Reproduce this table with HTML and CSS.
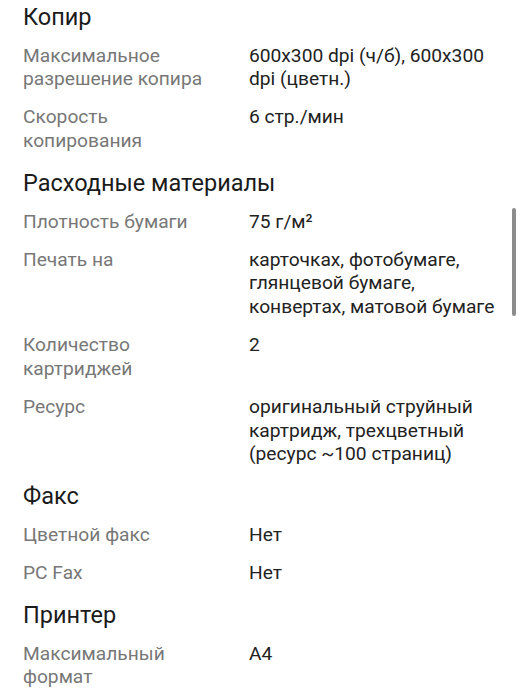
FILE: index.html
```html
<!DOCTYPE html>
<html lang="ru">
<head>
<meta charset="utf-8">
<link rel="stylesheet" href="styles.css">
</head>
<body>
<div class="page">
  <section class="group">
    <h2 class="group-title">Копир</h2>
    <div class="row"><div class="label">Максимальное разрешение копира</div><div class="value">600x300 dpi (ч/б), 600x300 dpi (цветн.)</div></div>
    <div class="row"><div class="label">Скорость копирования</div><div class="value">6 стр./мин</div></div>
  </section>
  <section class="group">
    <h2 class="group-title">Расходные материалы</h2>
    <div class="row"><div class="label">Плотность бумаги</div><div class="value">75 г/м²</div></div>
    <div class="row"><div class="label">Печать на</div><div class="value">карточках, фотобумаге, глянцевой бумаге, конвертах, матовой бумаге</div></div>
    <div class="row"><div class="label">Количество картриджей</div><div class="value">2</div></div>
    <div class="row"><div class="label">Ресурс</div><div class="value">оригинальный струйный картридж, трехцветный (ресурс ~100 страниц)</div></div>
  </section>
  <section class="group">
    <h2 class="group-title">Факс</h2>
    <div class="row"><div class="label">Цветной факс</div><div class="value">Нет</div></div>
    <div class="row"><div class="label">PC Fax</div><div class="value">Нет</div></div>
  </section>
  <section class="group">
    <h2 class="group-title">Принтер</h2>
    <div class="row"><div class="label">Максимальный формат</div><div class="value">A4</div></div>
  </section>
</div>
<div class="scrollbar"></div>
</body>
</html>
```
FILE: styles.css
```css
html, body {
  margin: 0;
  padding: 0;
  background: #ffffff;
}
body {
  font-family: Roboto, "Noto Sans", sans-serif;
  width: 520px;
  height: 700px;
  overflow: hidden;
  position: relative;
}
.page {
  padding: 1px 23px 0 23px;
  display: flex;
  flex-direction: column;
}
.group-title {
  margin: 0 0 10.5px 0;
  font-size: 23.5px;
  line-height: 32px;
  font-weight: 400;
  color: #1b1b1b;
}
.row {
  display: grid;
  grid-template-columns: 196px 1fr;
  column-gap: 30px;
  font-size: 19.2px;
  line-height: 23.6px;
  margin-bottom: 14.6px;
}
.label {
  color: #777777;
}
.value {
  color: #222222;
}
.scrollbar {
  position: absolute;
  left: 512px;
  top: 208px;
  width: 4px;
  height: 108px;
  border-radius: 2px;
  background: #8c8c8c;
}
```
